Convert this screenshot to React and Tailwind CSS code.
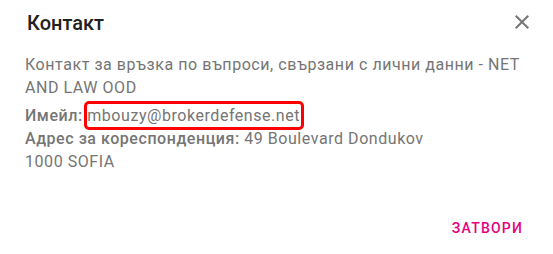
import React from "react";

export default function App() {
  return (
    <div className="w-[553px] h-[254px] bg-white flex flex-col font-['Roboto','Liberation_Sans',sans-serif]">
      <div className="flex items-start justify-between pl-[27px] pr-[19px]">
        <h2 className="pt-[7px] text-[20px] leading-[32px] font-medium text-[#212121]">Контакт</h2>
        <button className="mt-[10px] w-6 h-6 flex items-center justify-center">
          <svg viewBox="0 0 24 24" className="w-6 h-6 fill-[#757575]">
            <path d="M19 6.41 17.59 5 12 10.59 6.41 5 5 6.41 10.59 12 5 17.59 6.41 19 12 13.41 17.59 19 19 17.59 13.41 12z" />
          </svg>
        </button>
      </div>

      <div className="px-[25px] pt-[14px] text-[16px] leading-[23px] tracking-[0.55px] text-[#757575]">
        <p>Контакт за връзка по въпроси, свързани с лични данни - NET AND LAW OOD</p>
        <div className="mt-[5px]">
          <span className="font-medium">Имейл:</span>{" "}
          <span className="inline-block outline-[3px] outline-solid outline-[#ff0000] rounded-[2px] pr-[1px]">
            mbouzy@brokerdefense.net
          </span>
        </div>
        <div>
          <span className="font-medium">Адрес за кореспонденция:</span> 49 Boulevard Dondukov
        </div>
        <div>1000 SOFIA</div>
      </div>

      <div className="mt-auto flex justify-end pr-[22px] pb-2">
        <button className="h-9 px-2 text-[14px] font-medium tracking-[1.2px] uppercase text-[#e6007e]">
          Затвори
        </button>
      </div>
    </div>
  );
}
